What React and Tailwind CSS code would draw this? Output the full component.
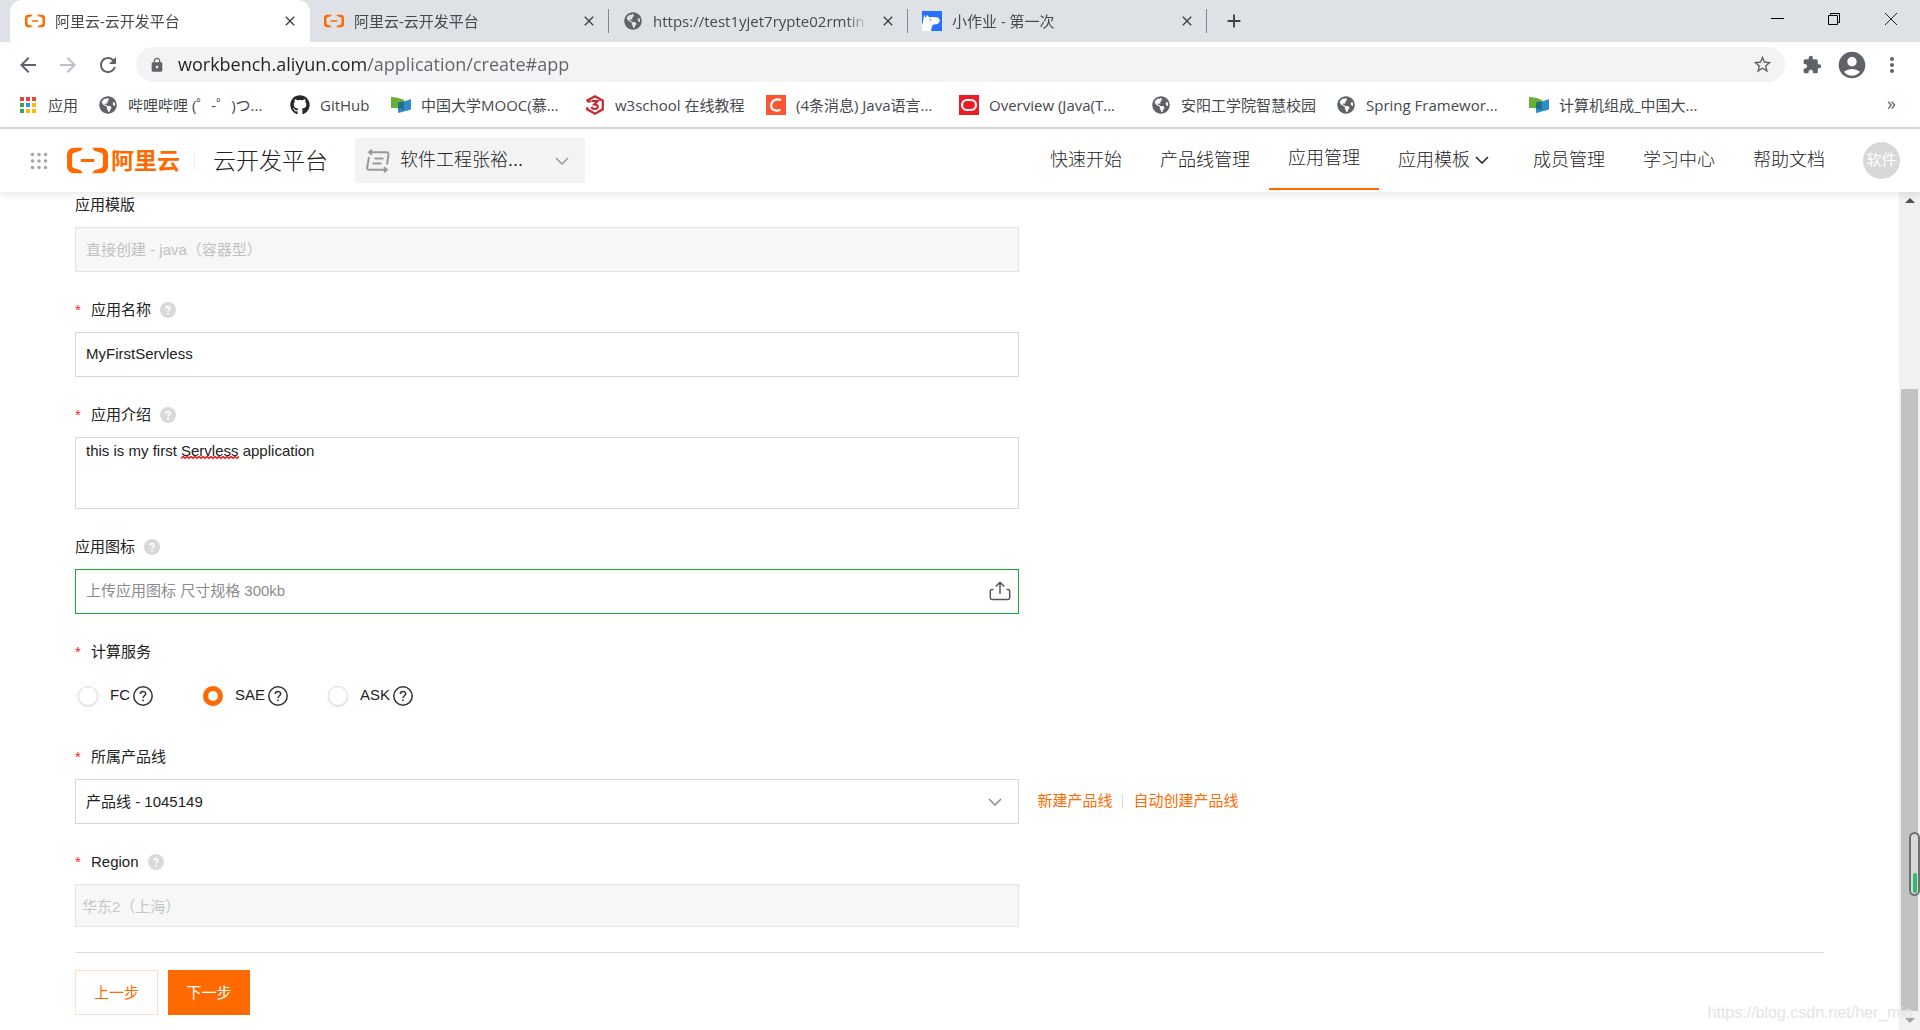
import { useState } from "react";
import {
  MdAccountCircle,
  MdAdd,
  MdArrowBack,
  MdArrowForward,
  MdClose,
  MdExtension,
  MdLock,
  MdMoreVert,
  MdRefresh,
  MdStarBorder,
} from "react-icons/md";
import { FaGithub, FaGlobeAmericas } from "react-icons/fa";
import { SiAlibabacloud } from "react-icons/si";

// ---------- icons ----------

function Globe() {
  return <FaGlobeAmericas className="size-[18px] text-[#5f6368]" />;
}

function AppsIcon() {
  const colors = [
    "#ea4335", "#ea4335", "#ea4335",
    "#34a853", "#4285f4", "#fbbc04",
    "#34a853", "#fbbc04", "#fbbc04",
  ];
  return (
    <svg viewBox="0 0 18 18" className="size-[18px]">
      {colors.map((c, i) => (
        <rect key={i} x={1 + (i % 3) * 6} y={1 + Math.floor(i / 3) * 6} width="4" height="4" fill={c} />
      ))}
    </svg>
  );
}

function MoocIcon() {
  return (
    <svg viewBox="0 0 20 16" className="h-4 w-5">
      <path d="M0 0c4 .3 9 1 13 3v10c-4-1.800-9-2.300-13-2z" fill="#67b035" />
      <path d="M7 5.500C11 5 16 4 20 2v10.500c-4 1.300-9 2.500-13 3.500z" fill="#2c8dc4" />
      <path d="M7 5.500c2-.2 4-.5 6-1V13c-2-.9-4-1.300-6-1.600z" fill="#1f7089" />
    </svg>
  );
}

function W3Icon() {
  return (
    <svg viewBox="0 0 18 20" className="h-5 w-[18px]" fill="none" stroke="#c9262d" strokeWidth="2.2">
      <path d="M1.200 6V5.500L9 1.300l7.800 4.400v8.600L9 18.700l-7.800-4.400v-2" />
      <path d="M1 6.500h4M5.500 6h6L8.400 9.400c4.500-.2 4.300 4.600.4 4.600-1.600 0-2.900-.8-3.600-2" />
    </svg>
  );
}

function CsdnIcon() {
  return (
    <svg viewBox="0 0 20 20" className="size-5">
      <rect width="20" height="20" fill="#fc5531" />
      <path d="M15 5.200C11 3.200 5.500 5 5.200 10.500c-.2 4.800 4.800 6 9.300 4.300" fill="none" stroke="#fff" strokeWidth="2.200" />
    </svg>
  );
}

function OracleIcon() {
  return (
    <svg viewBox="0 0 20 20" className="size-5">
      <rect width="20" height="20" fill="#ee1c25" />
      <rect x="3" y="5" width="14" height="10" rx="5" fill="none" stroke="#fff" strokeWidth="2.200" />
    </svg>
  );
}

function DogIcon() {
  return (
    <svg viewBox="0 0 20 20" className="size-5">
      <rect width="20" height="20" fill="#2572ff" />
      <path d="M2 3.500 3.500 7 5 4l2.500 2.500c2.500-.8 6.500-.5 9 .2l1.500 3-2 3c-2 .8-3.500.5-5 1-1.500 1.800-1.500 4-2 6.300H0v-6c1-2 1.500-6 2-10.500z" fill="#fff" />
      <circle cx="8.500" cy="9" r=".8" fill="#2572ff" />
    </svg>
  );
}

function ChevronDown({ className }) {
  return (
    <svg viewBox="0 0 14 8" className={className} fill="none" stroke="currentColor" strokeWidth="1.5">
      <path d="m1 1 6 6 6-6" />
    </svg>
  );
}

function SwitchIcon() {
  return (
    <svg viewBox="0 0 24 24" className="size-6 text-[#999]" fill="none" stroke="currentColor" strokeWidth="2">
      <path d="M6 .8 3.200 3.300 6 5.800M3.500 3.300H20c2 0 2.700.9 2.400 2.500L21 15.500" />
      <path d="m18 18.200 2.800 2.500L18 23.200M20.500 20.700H3.500c-2 0-2.600-.9-2.300-2.500L3 8" />
      <path d="M8.500 9.500h9M6.500 14.500h9" />
    </svg>
  );
}

function HelpDot() {
  return (
    <svg viewBox="0 0 16 16" className="ml-[9px] size-4" role="img" aria-label="help">
      <circle cx="8" cy="8" r="8" fill="#d9d9d9" />
      <path d="M6 6.600C6 4 10 4 10 6.400 10 7.800 8 8 8 9.500" fill="none" stroke="#fff" strokeWidth="1.600" />
      <circle cx="8" cy="11.700" r="1" fill="#fff" />
    </svg>
  );
}

function HelpCircle() {
  return (
    <svg viewBox="0 0 20 20" className="size-5 text-[#333]" fill="none" stroke="currentColor" strokeWidth="1.500">
      <circle cx="10" cy="10" r="9.200" />
      <path d="M7.300 8c0-3.400 5.400-3.400 5.400-.2 0 1.900-2.700 2-2.700 4.200" />
      <path d="M10 13.500v1.700" />
    </svg>
  );
}

function UploadIcon() {
  return (
    <svg viewBox="0 0 22 20" className="h-5 w-[22px]" fill="none" stroke="currentColor" strokeWidth="1.500">
      <path d="M4.500 8.500H3c-1 0-1.700.6-1.700 1.600v6.700c0 1 .7 1.700 1.700 1.700h16c1 0 1.700-.7 1.700-1.700v-6.700c0-1-.7-1.600-1.700-1.600h-1.500" />
      <path d="M11 13V1.500M6.800 5.500 11 1.300l4.200 4.200" />
    </svg>
  );
}

// ---------- data ----------

const tabs = [
  { title: "阿里云-云开发平台", icon: "aliyun", active: true },
  { title: "阿里云-云开发平台", icon: "aliyun" },
  { title: "https://test1yjet7rypte02rmtin", icon: "globe" },
  { title: "小作业 - 第一次", icon: "dog" },
];

const bookmarks = [
  { label: "应用", icon: <AppsIcon />, width: "w-20" },
  { label: "哔哩哔哩 (゜-゜)つ...", icon: <Globe />, width: "w-48" },
  { label: "GitHub", icon: <FaGithub className="size-5 text-[#24292e]" />, width: "w-[101px]" },
  { label: "中国大学MOOC(慕...", icon: <MoocIcon />, width: "w-[194px]" },
  { label: "w3school 在线教程", icon: <W3Icon />, width: "w-[181px]" },
  { label: "(4条消息) Java语言...", icon: <CsdnIcon />, width: "w-[193px]" },
  { label: "Overview (Java(T...", icon: <OracleIcon />, width: "w-48" },
  { label: "安阳工学院智慧校园", icon: <Globe />, width: "w-[185px]" },
  { label: "Spring Framewor...", icon: <Globe />, width: "w-[193px]" },
  { label: "计算机组成_中国大...", icon: <MoocIcon />, width: "w-[193px]" },
];

const menu = [
  { label: "快速开始" },
  { label: "产品线管理" },
  { label: "应用管理", active: true },
  { label: "应用模板", dropdown: true },
  { label: "成员管理" },
  { label: "学习中心" },
  { label: "帮助文档" },
];

const services = ["FC", "SAE", "ASK"];

// ---------- browser ----------

function Tab({ tab, divider }) {
  return (
    <div
      className={
        tab.active
          ? "relative flex h-[42px] w-[300px] items-center rounded-t-xl bg-white pr-3 pl-[15px]"
          : "relative flex h-[42px] w-[299px] items-center pr-3 pl-[14px]"
      }
    >
      <span className="flex w-5 shrink-0 justify-center">
        {tab.icon === "aliyun" && <SiAlibabacloud className="size-5 text-[#ff6a00]" />}
        {tab.icon === "globe" && <Globe />}
        {tab.icon === "dog" && <DogIcon />}
      </span>
      <span className="ml-[10px] flex-1 overflow-hidden text-[15px] whitespace-nowrap text-[#45494d] [mask-image:linear-gradient(to_right,black_90%,transparent)]">
        {tab.title}
      </span>
      <button aria-label="close tab" className="ml-3 text-[#3c4043]">
        <MdClose className="size-4" />
      </button>
      {divider && <span className="absolute top-[9px] right-0 h-6 w-px bg-[#80868b]" />}
    </div>
  );
}

function BrowserChrome() {
  const [url, setUrl] = useState("workbench.aliyun.com/application/create#app");

  return (
    <div className="shrink-0 border-b-2 border-[#d9dadd] bg-white font-['Open_Sans','Noto_Sans_CJK_SC',sans-serif]">
      <div className="flex h-[42px] bg-[#dee1e6] pl-[10px]">
        {tabs.map((tab, i) => (
          <Tab key={i} tab={tab} divider={i > 0} />
        ))}
        <button aria-label="new tab" className="ml-4 text-[#3c4043]">
          <MdAdd className="size-[22px]" />
        </button>
        <div className="ml-auto flex items-center gap-[43px] pr-[22px] pb-[5px]">
          <button aria-label="minimize">
            <svg viewBox="0 0 14 14" className="size-[14px]" stroke="#000">
              <path d="M1 6.500h13" />
            </svg>
          </button>
          <button aria-label="restore">
            <svg viewBox="0 0 14 14" className="size-[14px]" fill="none" stroke="#000">
              <path d="M1.500 3.500h9v9h-9zM3.500 3V1.500h9v9H11" />
            </svg>
          </button>
          <button aria-label="close window">
            <svg viewBox="0 0 14 14" className="size-[14px]" stroke="#222">
              <path d="m1 1 12 12M13 1 1 13" />
            </svg>
          </button>
        </div>
      </div>

      <div className="flex h-[45px] items-center px-4 text-[#5f6368]">
        <button aria-label="back">
          <MdArrowBack className="size-6" />
        </button>
        <button aria-label="forward" className="ml-4 text-[#bdc1c6]">
          <MdArrowForward className="size-6" />
        </button>
        <button aria-label="reload" className="ml-4">
          <MdRefresh className="size-6" />
        </button>
        <div className="ml-4 flex h-[35px] flex-1 items-center rounded-full bg-[#f1f3f4] px-3">
          <MdLock className="ml-px size-4" />
          {/* host is darker than the path */}
          <input
            aria-label="address"
            value={url}
            onChange={(e) => setUrl(e.target.value)}
            className="ml-[13px] min-w-0 flex-1 bg-[linear-gradient(to_right,#202124_190px,#5f6368_190px)] bg-clip-text text-[18px] text-transparent caret-black outline-none"
          />
          <button aria-label="bookmark this page">
            <MdStarBorder className="size-[21px]" />
          </button>
        </div>
        <button aria-label="extensions" className="ml-[17px]">
          <MdExtension className="size-5" />
        </button>
        <button aria-label="profile" className="ml-[14px]">
          <MdAccountCircle className="size-8" />
        </button>
        <button aria-label="menu" className="ml-3">
          <MdMoreVert className="size-6" />
        </button>
      </div>

      <div className="flex h-10 items-start pr-6 pl-[18px]">
        {bookmarks.map((b) => (
          <a
            key={b.label}
            href="#"
            className={`flex h-9 shrink-0 items-center gap-[10px] text-[15px] whitespace-nowrap text-[#45494d] ${b.width}`}
          >
            <span className="flex w-5 shrink-0 justify-center">{b.icon}</span>
            {b.label}
          </a>
        ))}
        <button aria-label="more bookmarks" className="ml-auto h-8 text-[18px] text-[#5f6368]">
          »
        </button>
      </div>
    </div>
  );
}

// ---------- page ----------

function Header() {
  return (
    <header className="relative z-10 flex h-[63px] shrink-0 items-center bg-white pr-5 pl-[30px] font-light text-[#222] shadow-[0_2px_8px_rgba(0,0,0,0.1)]">
      <button aria-label="products">
        <svg viewBox="0 0 18 18" className="size-[18px]" fill="#a6a6a6">
          {[2.5, 9, 15.5].map((y) =>
            [2.5, 9, 15.5].map((x) => <circle key={`${x}-${y}`} cx={x} cy={y} r="1.800" />)
          )}
        </svg>
      </button>
      <a href="#" className="ml-[19px] flex items-center gap-[3px] text-[23px] leading-6 font-bold text-[#ff6a00]">
        <SiAlibabacloud className="size-[41px]" />
        阿里云
      </a>
      <span className="ml-[14px] h-5 w-px bg-[#eee]" />
      <span className="ml-[18px] text-[23px] leading-8">云开发平台</span>
      <button className="ml-[27px] flex h-[45px] w-[230px] items-center bg-[#f3f3f3] pr-4 pl-[11px] text-[18px]">
        <SwitchIcon />
        <span className="ml-[10px]">软件工程张裕...</span>
        <ChevronDown className="ml-auto h-2 w-[14px] text-[#999]" />
      </button>

      <nav className="ml-auto flex h-full items-start text-[18px]">
        {menu.map((item) => (
          <a
            key={item.label}
            href="#"
            className={`flex items-center px-[19px] ${
              item.active ? "h-[61px] border-b-2 border-[#ff6a00]" : "h-[62px]"
            }`}
          >
            {item.label}
            {item.dropdown && <ChevronDown className="mr-[6px] ml-[5px] h-2 w-[14px]" />}
          </a>
        ))}
      </nav>
      <button className="ml-[19px] size-[37px] rounded-full bg-[#d8d8d8] text-[15px] font-normal text-white">软件</button>
    </header>
  );
}

function Label({ htmlFor, required, help, children }) {
  return (
    <label htmlFor={htmlFor} className="mb-[9px] flex h-[26px] items-center">
      {required && <span className="w-4 text-[#f5222d]">*</span>}
      {children}
      {help && <HelpDot />}
    </label>
  );
}

function CreateForm() {
  const [name, setName] = useState("MyFirstServless");
  const [intro, setIntro] = useState("this is my first Servless application");
  const [service, setService] = useState("SAE");

  return (
    <form className="min-w-0 flex-1 overflow-hidden px-[75px]" onSubmit={(e) => e.preventDefault()}>
      <div className="mb-[25px]">
        <Label htmlFor="template">应用模版</Label>
        <input
          id="template"
          disabled
          value="直接创建 - java（容器型）"
          className="block h-[45px] w-[54%] border border-[#e3e4e6] bg-[#f7f7f7] px-[10px] pb-[2px] text-[#c1c1c1]"
        />
      </div>

      <div className="mb-[25px]">
        <Label htmlFor="name" required help>应用名称</Label>
        <input
          id="name"
          value={name}
          onChange={(e) => setName(e.target.value)}
          className="block h-[45px] w-[54%] border border-[#d7d8d9] px-[10px] pb-[2px] outline-none"
        />
      </div>

      <div className="mb-[25px]">
        <Label htmlFor="intro" required help>应用介绍</Label>
        <div className="relative w-[54%]">
          <textarea
            id="intro"
            spellCheck={false}
            value={intro}
            onChange={(e) => setIntro(e.target.value)}
            className="block h-[72px] w-full resize-none border border-[#d7d8d9] px-[10px] py-[3px] leading-5 outline-none"
          />
          {/* spelling mark under "Servless" */}
          <svg className="absolute top-[19px] left-[106px] h-[3px] w-[58px]">
            <defs>
              <pattern id="wave" width="4" height="3" patternUnits="userSpaceOnUse">
                <path d="M0 2.500 2 .5l2 2" fill="none" stroke="#f00" strokeWidth="1.300" />
              </pattern>
            </defs>
            <rect width="58" height="3" fill="url(#wave)" />
          </svg>
        </div>
      </div>

      <div className="mb-[25px]">
        <Label htmlFor="icon" help>应用图标</Label>
        <div className="flex h-[45px] w-[54%] items-center border border-[#1aab35] pr-[7px] pb-[2px] pl-[10px]">
          <input
            id="icon"
            readOnly
            placeholder="上传应用图标 尺寸规格 300kb"
            className="h-full min-w-0 flex-1 outline-none placeholder:text-[#8c8c8c]"
          />
          <button type="button" aria-label="upload" className="text-[#555]">
            <UploadIcon />
          </button>
        </div>
      </div>

      <div className="mb-[25px]">
        <Label required>计算服务</Label>
        <div className="flex h-[45px] items-center pb-[2px] pl-[3px]">
          {services.map((s) => (
            <label key={s} className="flex w-[125px] items-center">
              <input
                type="radio"
                name="service"
                checked={service === s}
                onChange={() => setService(s)}
                className="mr-3 size-5 appearance-none rounded-full border border-[#ddd] bg-white shadow-sm checked:border-[5px] checked:border-[#ff6a00]"
              />
              <span className="mr-[3px]">{s}</span>
              <HelpCircle />
            </label>
          ))}
        </div>
      </div>

      <div className="mb-[25px]">
        <Label htmlFor="line" required>所属产品线</Label>
        <div className="flex items-center">
          <div className="relative w-[54%]">
            <select
              id="line"
              className="block h-[45px] w-full appearance-none border border-[#d7d8d9] bg-white px-[10px] pt-px outline-none"
            >
              <option>产品线 - 1045149</option>
            </select>
            <ChevronDown className="pointer-events-none absolute top-[19px] right-[17px] h-2 w-[14px] text-[#888]" />
          </div>
          <a href="#" className="ml-[18px] text-[#ff6a00]">新建产品线</a>
          <span className="mx-[10px] h-[15px] w-px bg-[#d9d9d9]" />
          <a href="#" className="text-[#ff6a00]">自动创建产品线</a>
        </div>
      </div>

      <div className="mb-[25px]">
        <Label htmlFor="region" required help>Region</Label>
        <input
          id="region"
          disabled
          value="华东2（上海）"
          className="block h-[43px] w-[54%] border border-[#e3e4e6] bg-[#f7f7f7] px-[6px] text-[#c1c7cc]"
        />
      </div>

      <div className="flex gap-[10px] border-t border-[#dcdde0] pt-[17px]">
        <button type="button" className="h-[45px] w-[83px] border border-[#ffdfca] pt-px text-[#ff6a00]">上一步</button>
        <button type="submit" className="h-[45px] w-[82px] bg-[#ff6a00] pt-px text-white">下一步</button>
      </div>
    </form>
  );
}

function Scrollbar() {
  return (
    <div className="relative flex w-[21px] shrink-0 flex-col items-center bg-[#f1f1f1] text-[#505050]">
      <svg viewBox="0 0 10 5" className="mt-[6px] h-[5px] w-[10px]" fill="currentColor">
        <path d="M0 5 5 0l5 5z" />
      </svg>
      <div className="mt-[186px] mb-[7px] w-[17px] flex-1 bg-[#c1c1c1]" />
      <svg viewBox="0 0 10 5" className="mb-[7px] h-[5px] w-[10px] text-[#a3a3a3]" fill="currentColor">
        <path d="m0 0 5 5 5-5z" />
      </svg>
      {/* floating memory gauge */}
      <div className="absolute right-0 bottom-[134px] flex h-16 w-[11px] items-end justify-center rounded-full border-2 border-[#707070] bg-[#d8d8d8] p-px">
        <span className="h-5 w-1 rounded-full bg-[#2bbd68]" />
      </div>
    </div>
  );
}

export default function App() {
  return (
    <div className="flex h-screen flex-col overflow-hidden bg-white">
      <BrowserChrome />
      <div className="relative flex min-h-0 flex-1 flex-col font-['Liberation_Sans','Noto_Sans_CJK_SC',sans-serif] text-[15px] text-[#222]">
        <Header />
        <main className="flex min-h-0 flex-1">
          <CreateForm />
          <Scrollbar />
        </main>
        <span className="absolute right-[7px] bottom-[5px] text-[16px] text-[#e4e4e4]">
          https://blog.csdn.net/her_mia
        </span>
      </div>
    </div>
  );
}
